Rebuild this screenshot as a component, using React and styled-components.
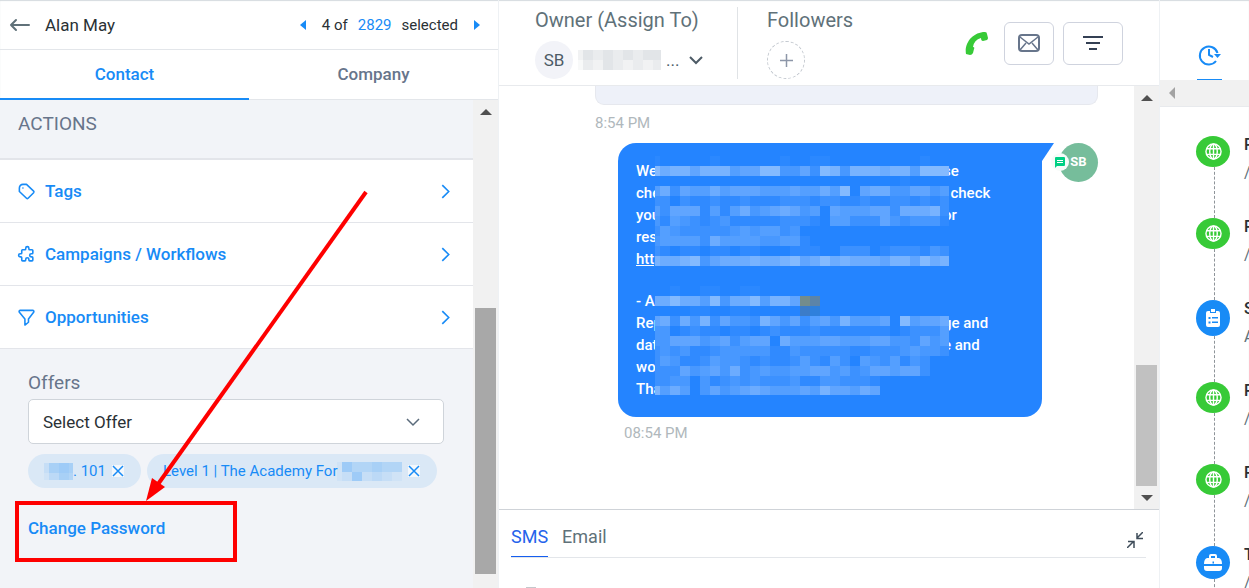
import React from 'react';
import styled, { createGlobalStyle } from 'styled-components';

const GlobalStyle = createGlobalStyle`
  *, *::before, *::after {
    box-sizing: border-box;
  }

  body {
    margin: 0;
    background: #fff;
    color: #2a3135;
    font-family: Roboto, "Liberation Sans", sans-serif;
    font-size: 16px;
  }

  button, select {
    font-family: inherit;
  }

  button {
    padding: 0;
    border: none;
    background: none;
    cursor: pointer;
  }

  svg {
    display: block;
    flex-shrink: 0;
  }
`;

const Page = styled.div`
  display: grid;
  grid-template-columns: 499px minmax(0, 1fr) 89px;
  height: 100vh;
  overflow: hidden;
  box-shadow: inset 0 1px 1px #d5dbdf;
`;

const Column = styled.div`
  position: relative;
  display: flex;
  flex-direction: column;
  min-width: 0;
  min-height: 0;
  border-right: 1px solid #eef1f4;
`;

/* scrollbars */

const Track = styled.div`
  display: flex;
  flex-direction: column;
  align-items: center;
  flex: 0 0 25px;
  padding: 0 2px;
  background: #f1f1f1;
`;

const Arrow = styled.div`
  display: flex;
  align-items: center;
  justify-content: center;
  height: 23px;
  color: #505050;
`;

const Gap = styled.div`
  flex: ${props => props.size} 0 0;
`;

const Thumb = styled.div`
  width: 100%;
  flex: ${props => props.size} 0 0;
  background: ${props => props.color};
`;

/* contact panel */

const TopBar = styled.header`
  display: flex;
  align-items: center;
  height: 50px;
  padding: 1px 18px 0 9px;
  border-bottom: 1px solid #e3e6ea;
`;

const Name = styled.h1`
  flex: 1;
  margin: 0 0 0 15px;
  font-size: 17px;
  font-weight: 400;
`;

const Pager = styled.div`
  display: flex;
  align-items: center;
  font-size: 15px;

  a {
    margin: 0 10px;
    color: #188bf6;
    text-decoration: none;
  }
`;

const PagerButton = styled.button`
  padding: 4px 0;
  color: #188bf6;

  &:first-child {
    margin-right: 16px;
  }

  &:last-child {
    margin-left: 16px;
  }
`;

const Tabs = styled.nav`
  display: flex;
  height: 50px;
  border-bottom: 1px solid #e3e6ea;
`;

const Tab = styled.button`
  flex: 1;
  height: 50px;
  border-bottom: 2px solid ${props => (props.$active ? '#188bf6' : 'transparent')};
  color: ${props => (props.$active ? '#188bf6' : '#67758b')};
  font-size: 17px;
  font-weight: 500;
`;

const Scroller = styled.div`
  display: flex;
  flex: 1;
  min-height: 0;
`;

const PanelBody = styled.div`
  flex: 1;
  min-width: 0;
  overflow: hidden;
  background: #f2f4f8;
`;

const SectionTitle = styled.h2`
  height: 60px;
  margin: 0;
  padding: 12px 18px;
  border-bottom: 2px solid #e3e5ea;
  color: #67758b;
  font-size: 19px;
  font-weight: 400;
  line-height: 24px;
`;

const ActionRow = styled.button`
  display: flex;
  align-items: center;
  width: 100%;
  height: 63px;
  padding: 0 20px 0 17px;
  border-bottom: 1px solid #e3e5ea;
  background: #fff;
  color: #188bf6;
  font-size: 17px;
  font-weight: 500;

  span {
    flex: 1;
    margin-left: 9px;
    text-align: left;
  }
`;

const Offers = styled.section`
  padding: 23px 29px 0 28px;
`;

const Label = styled.label`
  display: block;
  color: #67758b;
  font-size: 19px;
  line-height: 22px;
`;

const SelectBox = styled.div`
  display: grid;
  align-items: center;
  margin-top: 5px;

  > * {
    grid-area: 1 / 1;
  }

  svg {
    justify-self: end;
    margin-right: 24px;
    color: #5a6b7b;
    pointer-events: none;
  }
`;

const Select = styled.select`
  width: 100%;
  height: 45px;
  padding: 0 14px;
  border: 1px solid #cfd4da;
  border-radius: 5px;
  background: #fff;
  color: #2a3135;
  font-size: 17px;
  appearance: none;
`;

const Chips = styled.div`
  display: flex;
  gap: 6px;
  margin-top: 10px;
`;

const Chip = styled.div`
  display: flex;
  align-items: center;
  height: 34px;
  padding: 0 17px 0 16px;
  border-radius: 17px;
  background: #dae8f6;
  color: #188bf6;
  font-size: 15px;
  white-space: nowrap;
`;

const RemoveButton = styled.button`
  margin-left: 6px;
  background: #f4f8fc;
  color: #188bf6;
`;

const PasswordLink = styled.a`
  display: inline-block;
  margin-top: 29px;
  color: #188bf6;
  font-size: 17px;
  font-weight: 500;
  line-height: 22px;
  text-decoration: none;
`;

const Callout = styled.svg`
  position: absolute;
  top: 0;
  left: 0;
  pointer-events: none;
`;

/* conversation */

const ChatHeader = styled.header`
  display: flex;
  height: 86px;
  padding: 7px 36px 0;
  border-bottom: 1px solid #e8eaed;
`;

const Assign = styled.div`
  height: 72px;
  color: #607179;
  font-size: 20px;
  line-height: 27px;

  & + & {
    padding-left: 29px;
    border-left: 1px solid #e0e3e6;
  }
`;

const Owner = styled.button`
  display: flex;
  align-items: center;
  width: 202px;
  margin-top: 7px;
  color: #4d5b66;
  font-size: 17px;
`;

const Initials = styled.span`
  width: 38px;
  height: 38px;
  margin-right: 5px;
  border-radius: 50%;
  background: #f2f3f8;
  line-height: 38px;
`;

const Dots = styled.span`
  margin: 0 10px 0 5px;
`;

const AddButton = styled.button`
  display: flex;
  align-items: center;
  justify-content: center;
  width: 38px;
  height: 38px;
  margin-top: 7px;
  border: 1px dashed #c3c8cf;
  border-radius: 50%;
  color: #8d96a8;
`;

const Tools = styled.div`
  display: flex;
  align-items: center;
  gap: 9px;
  height: 72px;
  margin-left: auto;
`;

const ToolButton = styled.button`
  display: flex;
  align-items: center;
  justify-content: center;
  width: ${props => props.$width}px;
  height: 43px;
  border: 1px solid #cfd3de;
  border-radius: 6px;
  color: #67758b;
`;

const CallButton = styled.button`
  margin-right: 7px;
  color: #37ca37;
`;

const Thread = styled.div`
  flex: 1;
  padding: 0 36px 0 96px;
  color: #b0b8bc;
  font-size: 15px;
  line-height: 18px;
`;

const Previous = styled.div`
  height: 19px;
  border: 1px solid #e6e8ee;
  border-top: none;
  border-radius: 0 0 9px 9px;
  background: #eef1f9;
`;

const Time = styled.time`
  display: block;
  padding: ${props => (props.$sent ? '7px 29px' : '9px 0 11px')};
`;

const Message = styled.div`
  display: flex;
  align-items: flex-start;
  margin-left: 23px;
`;

const Bubble = styled.div`
  position: relative;
  flex: 1;
  padding: 17px 18px;
  border-radius: 18px 0 18px 18px;
  background: #2484ff;
  color: #fff;
  font-size: 15px;
  font-weight: 500;
  line-height: 22px;

  p {
    margin: 0;
  }

  p + p {
    margin-top: 20px;
  }

  a {
    color: #fff;
  }
`;

const Line = styled.span`
  display: grid;
  grid-template-columns: 307px 1fr;
  white-space: pre;
`;

const BubbleMosaic = styled.div`
  position: absolute;
  top: 13px;
  left: 37px;
  background: #2484ff;
`;

const Tail = styled.svg`
  color: #2484ff;
`;

const Avatar = styled.div`
  position: relative;
  width: 39px;
  height: 39px;
  margin-left: 5px;
  border-radius: 50%;
  background: #76bd9b;
  color: #fff;
  font-size: 13px;
  font-weight: 700;
  line-height: 38px;
  text-align: center;
`;

const Badge = styled.span`
  position: absolute;
  top: 10px;
  left: -8px;
  display: flex;
  align-items: center;
  justify-content: center;
  width: 18px;
  height: 18px;
  border-radius: 50%;
  background: #f7fbf9;
  color: #00d084;
`;

const Composer = styled.footer`
  height: 79px;
  padding: 0 13px 0 12px;
  border-top: 1px solid #cfd3d8;
`;

const ComposerTabs = styled.div`
  display: flex;
  align-items: center;
  gap: 14px;
  height: 48px;
  border-bottom: 1px solid #e3e6ea;
`;

const ComposerTab = styled.button`
  height: 38px;
  margin-top: 9px;
  padding-bottom: 2px;
  border-bottom: 1px solid ${props => (props.$active ? '#155eef' : 'transparent')};
  color: ${props => (props.$active ? '#2563eb' : '#607179')};
  font-size: 18px;
`;

const CollapseButton = styled.button`
  margin: 12px 3px 0 auto;
  color: #3f4d5a;
`;

const Toolbar = styled.div`
  width: 10px;
  margin: 29px 0 0 15px;
  border-top: 1px solid #c4c8cc;
`;

/* activity */

const Activity = styled.aside`
  min-width: 0;
  overflow: hidden;
`;

const ActivityTab = styled.button`
  display: flex;
  width: 25px;
  height: 36px;
  margin: 44px 0 0 37px;
  padding-left: 1px;
  border-bottom: 1px solid #188bf6;
  color: #188bf6;
`;

const SideTrack = styled.div`
  height: 27px;
  padding: 7px 9px;
  border-bottom: 1px solid #e8eaed;
  background: #f1f1f1;
  color: #a3a3a3;
`;

const Timeline = styled.ul`
  margin: 0;
  padding: 29px 0 0 36px;
  list-style: none;
`;

const Event = styled.li`
  display: grid;
  grid-template-columns: 34px 1fr;
  grid-template-rows: auto 1fr;
  column-gap: 14px;
  height: 82px;
`;

const EventIcon = styled.span`
  display: flex;
  align-items: center;
  justify-content: center;
  width: 34px;
  height: ${props => props.$height}px;
  border-radius: 50%;
  background: ${props => props.color};
  color: #fff;
`;

const Connector = styled.span`
  justify-self: center;
  width: 1px;
  margin-left: 3px;
  border-left: 1px dashed #8e9499;
`;

const EventText = styled.div`
  grid-area: 1 / 2 / 3 / 3;
  font-size: 16px;
  font-weight: 500;
  line-height: 18px;
  white-space: nowrap;

  a {
    display: block;
    margin-top: 10px;
    color: #607179;
    font-weight: 400;
    text-decoration: none;
  }
`;

const Chevron = ({ direction = 'down', size = 14, weight = 2 }) => {
  const d = direction === 'down' ? 'M1 4l6 6 6-6' : 'M4 1l6 6-6 6';
  return (
    <svg width={size} height={size} viewBox="0 0 14 14" fill="none" stroke="currentColor" strokeWidth={weight}>
      <path d={d} />
    </svg>
  );
};

const Triangle = ({ points, width = 12, height = 6 }) => (
  <svg width={width} height={height} fill="currentColor">
    <polygon points={points} />
  </svg>
);

const Cross = () => (
  <svg width="12" height="12" fill="none" stroke="currentColor" strokeWidth="1.500">
    <path d="M1 1l10 10M11 1L1 11" />
  </svg>
);

const Outline = ({ children, size = 20, weight = 2 }) => (
  <svg
    width={size}
    height={size}
    viewBox="0 0 24 24"
    fill="none"
    stroke="currentColor"
    strokeWidth={weight}
    strokeLinecap="round"
    strokeLinejoin="round"
  >
    {children}
  </svg>
);

// Digits give the strength of a cell, letters a colour of its own
const special = { a: '#738c8c', b: '#5c84a8', c: '#3c7cc8', d: '#2f80dc', e: '#2b88ff' };

const Mosaic = ({ rows, fill = '#fff', start = 0, width, height }) => (
  <svg width={width} height={height} viewBox={`${start} 0 ${width} ${height}`} shapeRendering="crispEdges">
    {rows.map((row, y) =>
      row.split('').map((cell, x) => cell !== '0' && (
        <rect
          key={`${x}-${y}`}
          x={x * 10}
          y={y * 10}
          width="10"
          height="10"
          fill={special[cell] || fill}
          fillOpacity={special[cell] ? 1 : cell * 0.055}
        />
      )))}
  </svg>
);

const messageRows = [
  'e00000e000000e00ee000000000e00',
  '867757774558833528737776774888',
  '0000000000000000000000000e0000',
  '462544645554445446480566335534',
  '220211211211122212211211221212',
  '425551414634565340544455266672',
  '314321231111122210442225323331',
  '243222223434423',
  '3444426444433441',
  '210110110110001110022201222132',
  '766783566676678568676665775867',
  '',
  '',
  '00e00ee00ee0000',
  '668664836684775ab',
  '0000ee00ee00000cd',
  '562637253327535245374445084556',
  '330121101101211121111111012224',
  '335553452455064445544455332534',
  '232311233333113222221122234332',
  '2431124332121124214204324132',
  '2225345362343344553423554552',
  '22330312323222311332221',
  '74640353456544454755465',
];

const actions = [
  {
    name: 'Tags',
    icon: (
      <React.Fragment>
        <path d="M3 7.500a4.500 4.500 0 014.500-4.500H12l9 8.500a1.500 1.500 0 010 2l-7 7a1.500 1.500 0 01-2 0L3 12z" />
        <path d="M7.500 7.500h.01" />
      </React.Fragment>
    ),
  },
  {
    name: 'Campaigns / Workflows',
    icon: (
      <path d="M11 4a2 2 0 114 0v1a1 1 0 001 1h3a1 1 0 011 1v3a1 1 0 01-1 1h-1a2 2 0 100 4h1a1 1 0 011 1v3a1 1 0 01-1 1h-3a1 1 0 01-1-1v-1a2 2 0 10-4 0v1a1 1 0 01-1 1H7a1 1 0 01-1-1v-3a1 1 0 00-1-1H4a2 2 0 110-4h1a1 1 0 001-1V7a1 1 0 011-1h3a1 1 0 001-1V4z" />
    ),
  },
  {
    name: 'Opportunities',
    icon: <path d="M4 3h16q2 .5 1 2.500L14.500 14v4L10 21.500V14L3 5.500Q2 3.500 4 3z" />,
  },
];

const events = [
  { type: 'globe', title: 'P', link: '/' },
  { type: 'globe', title: 'P', link: '/' },
  { type: 'form', title: 'S', link: 'A' },
  { type: 'globe', title: 'P', link: '/' },
  { type: 'globe', title: 'P', link: '/' },
  { type: 'deal', title: 'T', link: '/' },
];

const eventStyles = {
  globe: { color: '#37ca37', height: 31 },
  form: { color: '#188bf6', height: 36 },
  deal: { color: '#188bf6', height: 33 },
};

const EventGlyph = ({ type }) => {
  if (type === 'globe') {
    return (
      <svg width="17" height="17" viewBox="0 0 18 18" fill="none" stroke="currentColor" strokeWidth="1.500">
        <circle cx="9" cy="9" r="8" />
        <ellipse cx="9" cy="9" rx="4" ry="8" />
        <path d="M9 1v16M2 6h14M2 12h14" />
      </svg>
    );
  }
  if (type === 'form') {
    return (
      <svg width="14" height="18" viewBox="0 0 14 18" fill="currentColor">
        <path fillRule="evenodd" d="M2 2h2v2h6V2h2a2 2 0 012 2v12a2 2 0 01-2 2H2a2 2 0 01-2-2V4a2 2 0 012-2zM2.500 8v2h2V8zm3.500 0v1.500h6V8zM2.500 12.500v2h2v-2zm3.500 0V14h6v-1.500z" />
        <path d="M5 0h4v3H5z" />
      </svg>
    );
  }
  return (
    <svg width="18" height="17" viewBox="0 0 18 17" fill="currentColor">
      <path fillRule="evenodd" d="M5 4V2q0-2 2-2h4q2 0 2 2v2h2q3 1 3 6H0q0-5 3-6zm2 0h4V2H7zm1.500 3.500v2h1.500v-2zM0 12h18v2q0 3-3 3H3q-3 0-3-3z" />
    </svg>
  );
};

const ContactPanel = () => (
  <Column>
    <TopBar>
      <button aria-label="Back">
        <svg width="21" height="14" viewBox="0 0 21 14" fill="none" stroke="#607179" strokeWidth="2">
          <path d="M7 2L2 7l5 5M2 7h18" strokeLinecap="round" strokeLinejoin="round" />
        </svg>
      </button>
      <Name>Alan May</Name>
      <Pager>
        <PagerButton aria-label="Previous contact">
          <Triangle points="6,0 0,5 6,10" width={6} height={10} />
        </PagerButton>
        4 of <a href="#contacts">2829</a> selected
        <PagerButton aria-label="Next contact">
          <Triangle points="0,0 6,5 0,10" width={6} height={10} />
        </PagerButton>
      </Pager>
    </TopBar>
    <Tabs>
      <Tab $active>Contact</Tab>
      <Tab>Company</Tab>
    </Tabs>
    <Scroller>
      <PanelBody>
        <SectionTitle>ACTIONS</SectionTitle>
        {actions.map(action => (
          <ActionRow key={action.name}>
            <Outline size={19}>{action.icon}</Outline>
            <span>{action.name}</span>
            <Chevron direction="right" size={15} weight={1.5} />
          </ActionRow>
        ))}
        <Offers>
          <Label htmlFor="offer">Offers</Label>
          <SelectBox>
            <Select id="offer" defaultValue="">
              <option value="">Select Offer</option>
            </Select>
            <Chevron weight={1.5} />
          </SelectBox>
          <Chips>
            <Chip>
              <Mosaic rows={['256540', '135443']} fill="#2492f8" start={5} width={29} height={17} />
              . 101
              <RemoveButton aria-label="Remove offer">
                <Cross />
              </RemoveButton>
            </Chip>
            <Chip>
              Level 1 | The Academy For
              <Mosaic rows={['1644544', '1262321']} fill="#2492f8" start={5} width={65} height={19} />
              <RemoveButton aria-label="Remove offer">
                <Cross />
              </RemoveButton>
            </Chip>
          </Chips>
          <PasswordLink href="#change-password">Change Password</PasswordLink>
        </Offers>
      </PanelBody>
      <Track>
        <Arrow><Triangle points="0,6 6,0 12,6" /></Arrow>
        <Gap size={185} />
        <Thumb size={266} color="#a8a8a8" />
        <Gap size={14} />
      </Track>
    </Scroller>
    <Callout width="400" height="570" fill="none" stroke="#fe0000">
      <path d="M366 192L156 487" strokeWidth="4" />
      <path d="M146 501L152 478L165 487z" fill="#fe0000" stroke="none" />
      <rect x="17" y="503" width="218" height="57" strokeWidth="4" />
    </Callout>
  </Column>
);

const Conversation = () => (
  <Column>
    <ChatHeader>
      <Assign>
        Owner (Assign To)
        <Owner>
          <Initials>SB</Initials>
          <Mosaic rows={['243434344', '132432323']} fill="#7d8a96" start={5} width={83} height={20} />
          <Dots>...</Dots>
          <Chevron weight={2} />
        </Owner>
      </Assign>
      <Assign>
        Followers
        <AddButton aria-label="Add follower">
          <svg width="13" height="13" stroke="currentColor" strokeWidth="1.500">
            <path d="M6.500 0v13M0 6.500h13" />
          </svg>
        </AddButton>
      </Assign>
      <Tools>
        <CallButton aria-label="Call">
          <svg width="23" height="23" viewBox="0 0 23 23" fill="currentColor">
            <path d="M1 22C-1 11 8 0 20 0q2 0 2 2l1 4q0 1-1 2l-4 1q-2 0-2-3-7 2-8 9 2 0 1 2l-1 4q-1 2-3 2z" />
          </svg>
        </CallButton>
        <ToolButton $width={50} aria-label="Email">
          <svg width="22" height="18" viewBox="0 0 22 18" fill="none" stroke="currentColor" strokeWidth="2">
            <rect x="1" y="1" width="20" height="16" rx="3" />
            <path d="M2 3l9 7 9-7M2 16l6-7M20 16l-6-7" strokeWidth="1.500" />
          </svg>
        </ToolButton>
        <ToolButton $width={60} aria-label="Filter">
          <svg width="20" height="14" stroke="#344054" strokeWidth="2">
            <path d="M0 1h20M3 7h14M6 13h8" />
          </svg>
        </ToolButton>
      </Tools>
    </ChatHeader>
    <Scroller>
      <Thread>
        <Previous />
        <Time>8:54 PM</Time>
        <Message>
          <Bubble>
            <p>
              <Line><span>We</span><span>se</span></Line>
              <Line><span>che</span><span>{'  check'}</span></Line>
              <Line><span>you</span><span>or</span></Line>
              <Line>res</Line>
              <Line><a href="#link">http</a></Line>
            </p>
            <p>
              <Line>- Ac</Line>
              <Line><span>Rep</span><span>ge and</span></Line>
              <Line><span>dat</span><span>e and</span></Line>
              <Line>wo</Line>
              <Line>Tha</Line>
            </p>
            <BubbleMosaic>
              <Mosaic rows={messageRows} start={5} width={294} height={239} />
            </BubbleMosaic>
          </Bubble>
          <Tail width="12" height="18" fill="currentColor">
            <path d="M0 0h12L0 18z" />
          </Tail>
          <Avatar>
            SB
            <Badge>
              <svg width="10" height="11" viewBox="0 0 10 11" fill="currentColor">
                <path d="M1 0h8q1 0 1 1v7q0 1-1 1H2l-2 2V1q0-1 1-1z" />
                <path d="M2 3.500h6M2 5.500h6" stroke="#fff" />
              </svg>
            </Badge>
          </Avatar>
        </Message>
        <Time $sent>08:54 PM</Time>
      </Thread>
      <Track>
        <Arrow><Triangle points="0,6 6,0 12,6" /></Arrow>
        <Gap size={256} />
        <Thumb size={121} color="#c1c1c1" />
        <Arrow><Triangle points="0,0 12,0 6,6" /></Arrow>
      </Track>
    </Scroller>
    <Composer>
      <ComposerTabs>
        <ComposerTab $active>SMS</ComposerTab>
        <ComposerTab>Email</ComposerTab>
        <CollapseButton aria-label="Collapse">
          <svg width="16" height="16" fill="none" stroke="currentColor" strokeWidth="1.500">
            <path d="M16 0l-6 6M10 1v5.500h6M0 16l6-6M1 9.500h6V16" />
          </svg>
        </CollapseButton>
      </ComposerTabs>
      <Toolbar />
    </Composer>
  </Column>
);

const ActivityPanel = () => (
  <Activity>
    <ActivityTab aria-label="Activity">
      <svg width="23" height="22" viewBox="0 0 23 22" fill="none" stroke="currentColor" strokeWidth="2">
        <path d="M18 17a9 9 0 111.500-8" />
        <path d="M11 5v6l4 2" />
        <path d="M16 10h7l-3.500 4z" fill="currentColor" stroke="none" />
      </svg>
    </ActivityTab>
    <SideTrack>
      <Triangle points="6,0 0,6 6,12" width={6} height={12} />
    </SideTrack>
    <Timeline>
      {events.map((event, index) => (
        <Event key={index}>
          <EventIcon color={eventStyles[event.type].color} $height={eventStyles[event.type].height}>
            <EventGlyph type={event.type} />
          </EventIcon>
          <Connector />
          <EventText>
            {event.title}
            <a href="#event">{event.link}</a>
          </EventText>
        </Event>
      ))}
    </Timeline>
  </Activity>
);

export default () => (
  <React.Fragment>
    <GlobalStyle />
    <Page>
      <ContactPanel />
      <Conversation />
      <ActivityPanel />
    </Page>
  </React.Fragment>
);
